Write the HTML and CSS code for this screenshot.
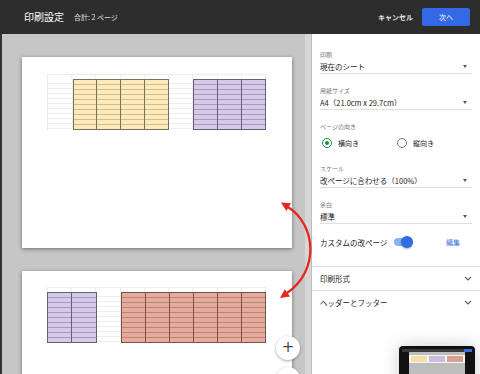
FILE: index.html
```html
<!DOCTYPE html>
<html lang="ja">
<head>
<meta charset="UTF-8">
<meta name="viewport" content="width=device-width, initial-scale=1.0">
<title>印刷設定</title>
<link rel="stylesheet" href="styles.css">
</head>
<body>
  <header class="topbar">
    <h1 class="title">印刷設定</h1>
    <span class="total">合計: 2 ページ</span>
    <div class="actions">
      <span class="cancel">キャンセル</span>
      <span class="next">次へ</span>
    </div>
  </header>

  <div class="main">
    <div class="preview">
      <!-- page 1 -->
      <div class="page">
        <div class="sheet">
          <div class="sheet-head"><span></span><span></span><span></span><span></span><span></span><span></span><span></span><span></span><span></span></div>
          <div class="sheet-body">
            <div class="grp blank w1"><span></span></div>
            <div class="grp yellow w4"><span></span><span></span><span></span><span></span></div>
            <div class="grp blank w1"><span></span></div>
            <div class="grp purple w3"><span></span><span></span><span></span></div>
          </div>
        </div>
      </div>
      <!-- page 2 -->
      <div class="page page-two">
        <div class="sheet">
          <div class="sheet-head"><span></span><span></span><span></span><span></span><span></span><span></span><span></span><span></span><span></span></div>
          <div class="sheet-body">
            <div class="grp purple w2"><span></span><span></span></div>
            <div class="grp blank w1"><span></span></div>
            <div class="grp red w6"><span></span><span></span><span></span><span></span><span></span><span></span></div>
          </div>
        </div>
      </div>
    </div>
    <div class="scroll"></div>

    <div class="panel">
      <div class="field">
        <div class="label">印刷</div>
        <div class="value">現在のシート<i class="caret"></i></div>
      </div>
      <div class="field">
        <div class="label">用紙サイズ</div>
        <div class="value">A4（21.0cm x 29.7cm）<i class="caret"></i></div>
      </div>
      <div class="field">
        <div class="label">ページの向き</div>
        <div class="radio-row">
          <div class="radio-opt"><i class="radio checked"></i>横向き</div>
          <div class="radio-opt"><i class="radio"></i>縦向き</div>
        </div>
      </div>
      <div class="field">
        <div class="label">スケール</div>
        <div class="value">改ページに合わせる（100%）<i class="caret"></i></div>
      </div>
      <div class="field tight">
        <div class="label">余白</div>
        <div class="value">標準<i class="caret"></i></div>
      </div>
      <div class="toggle-row">
        <span>カスタムの改ページ</span>
        <span class="toggle"><i class="knob"></i></span>
        <span class="edit">編集</span>
      </div>
      <div class="section">印刷形式
        <svg class="chev" width="8" height="5" viewBox="0 0 8 5"><polyline points="1,1 4,4 7,1" fill="none" stroke="#5f6368" stroke-width="1.2"/></svg>
      </div>
      <div class="section">ヘッダーとフッター
        <svg class="chev" width="8" height="5" viewBox="0 0 8 5"><polyline points="1,1 4,4 7,1" fill="none" stroke="#5f6368" stroke-width="1.2"/></svg>
      </div>

      <div class="thumb">
        <div class="thumb-bar"><i></i></div>
        <div class="thumb-body">
          <div class="thumb-strip"><i class="ty"></i><i class="tp"></i><i class="tr"></i></div>
        </div>
      </div>
    </div>

    <!-- overlays -->
    <svg class="arrow" width="45" height="115" viewBox="0 0 45 115">
      <path d="M18 13 C 46 31, 50 76, 17 99" fill="none" stroke="#e8261c" stroke-width="2.3"/>
      <polygon points="11,8.5 16.4,17 21,9.2" fill="#e8261c"/>
      <polygon points="10,104 20,102.6 14.8,95.2" fill="#e8261c"/>
    </svg>
    <div class="zoom-btn zoom-in">+</div>
    <div class="zoom-btn zoom-out"></div>
  </div>
</body>
</html>
```

FILE: styles.css
```css
body {
  margin: 0;
  padding: 0;
  width: 480px;
  height: 374px;
  overflow: hidden;
  background-color: #333;
  font-family: "Noto Sans CJK JP", "Noto Sans", sans-serif;
  color: #222;
}

/* top bar */
.topbar {
  height: 34px;
  box-sizing: border-box;
  padding: 0 10px 0 24px;
  display: flex;
  align-items: center;
  background-color: #2d2d2d;
  color: #fff;
}
.title {
  margin: 0 10px 0 0;
  font-size: 10px;
  font-weight: normal;
  line-height: 14px;
}
.total {
  font-size: 7px;
  color: #e0e0e0;
}
.actions {
  margin-left: auto;
  display: flex;
  align-items: center;
}
.cancel {
  font-size: 7px;
  font-weight: bold;
  color: #e6e6e6;
  margin-right: 9px;
}
.next {
  width: 48px;
  height: 18px;
  line-height: 18px;
  text-align: center;
  font-size: 7px;
  background-color: #3469e6;
  border-radius: 2px;
  color: #fff;
}

/* main area */
.main {
  height: 340px;
  display: flex;
  position: relative;
  overflow: hidden;
}
.preview {
  margin-left: 2px;
  width: 303px;
  flex-shrink: 0;
  box-sizing: border-box;
  padding: 23px 0 0 20px;
  background-color: #c6c6c6;
  display: flex;
  flex-direction: column;
  gap: 23px;
}
.page {
  width: 270px;
  height: 191px;
  flex-shrink: 0;
  box-sizing: border-box;
  padding: 17px 0 0 25px;
  background-color: #fff;
  box-shadow: 0 1px 4px rgba(0, 0, 0, 0.45);
}
.page-two {
  padding-top: 16px;
}
.scroll {
  width: 6px;
  flex-shrink: 0;
  background-color: #d7d7d7;
}

/* mini spreadsheet */
.sheet {
  width: 219px;
}
.sheet-head {
  display: flex;
  height: 5px;
}
.sheet-head span {
  flex: 1;
  border-top: 1px solid #ececec;
  border-right: 1px solid #ececec;
}
.sheet-head span:first-child {
  border-left: 1px solid #ececec;
}
.sheet-body {
  display: flex;
  height: 51px;
}
.grp {
  display: flex;
  box-sizing: border-box;
  background-image: repeating-linear-gradient(to bottom, transparent 0 4px, var(--line) 4px 5px);
}
.grp span {
  flex: 1;
  border-right: 1px solid var(--col);
}
.grp span:last-child {
  border-right: none;
}
.w1 { flex: 1; }
.w2 { flex: 2; }
.w3 { flex: 3; }
.w4 { flex: 4; }
.w6 { flex: 6; }
.blank {
  --line: #ededed;
  --col: #ededed;
  background-color: #fff;
  border-right: 1px solid #ededed;
}
.sheet-body .blank:first-child {
  border-left: 1px solid #ededed;
}
.yellow {
  --line: rgba(110, 90, 50, 0.32);
  --col: #7a705c;
  background-color: #fdeabb;
  border: 1px solid #7a705c;
}
.purple {
  --line: rgba(70, 50, 100, 0.32);
  --col: #685e7a;
  background-color: #d5cae8;
  border: 1px solid #685e7a;
}
.red {
  --line: rgba(110, 40, 30, 0.3);
  --col: #76524b;
  background-color: #e5ab9e;
  border: 1px solid #76524b;
}

/* settings panel */
.panel {
  flex: 1;
  position: relative;
  box-sizing: border-box;
  padding-top: 15px;
  background-color: #fff;
  border-left: 1px solid #bdbdbd;
}
.field {
  margin: 0 10px 11px 8px;
}
.field.tight {
  margin-bottom: 8px;
}
.label {
  font-size: 6px;
  line-height: 11px;
  color: #757575;
}
.value {
  font-size: 7.5px;
  line-height: 13px;
  display: flex;
  justify-content: space-between;
  align-items: center;
  border-bottom: 1px solid #e0e0e0;
}
.caret {
  width: 0;
  height: 0;
  margin-right: 5px;
  border-left: 2.5px solid transparent;
  border-right: 2.5px solid transparent;
  border-top: 3px solid #555;
}
.radio-row {
  margin-top: 2px;
  height: 18px;
  display: flex;
  align-items: center;
  font-size: 7px;
}
.radio-opt {
  width: 75px;
  display: flex;
  align-items: center;
  margin-left: 2px;
}
.radio-opt + .radio-opt {
  margin-left: 0;
}
.radio {
  width: 10px;
  height: 10px;
  box-sizing: border-box;
  margin-right: 6px;
  border: 1.3px solid #757575;
  border-radius: 50%;
  position: relative;
}
.radio.checked {
  border-color: #1e8e3e;
}
.radio.checked::after {
  content: "";
  position: absolute;
  left: 1.7px;
  top: 1.7px;
  width: 4px;
  height: 4px;
  border-radius: 50%;
  background-color: #1e8e3e;
}
.toggle-row {
  margin: 0 0 14px 8px;
  height: 20px;
  display: flex;
  align-items: center;
  font-size: 7.5px;
}
.toggle {
  position: relative;
  width: 17px;
  height: 8px;
  margin-left: 7px;
  border-radius: 4px;
  background-color: #8fb0ef;
}
.knob {
  position: absolute;
  right: -2px;
  top: -2px;
  width: 12px;
  height: 12px;
  border-radius: 50%;
  background-color: #2f6de1;
  box-shadow: 0 1px 2px rgba(0, 0, 0, 0.3);
}
.edit {
  margin-left: auto;
  margin-right: 22px;
  font-size: 7px;
  color: #3b78e0;
}
.section {
  height: 24px;
  box-sizing: border-box;
  padding: 0 10px 0 8px;
  display: flex;
  align-items: center;
  justify-content: space-between;
  border-top: 1px solid #dcdcdc;
  font-size: 7.5px;
}
.section:last-of-type {
  border-bottom: 1px solid #dcdcdc;
}

/* floating thumbnail */
.thumb {
  position: absolute;
  right: 7px;
  top: 312px;
  width: 76px;
  height: 40px;
  box-sizing: border-box;
  padding: 3px;
  background-color: #111;
  border-radius: 4px;
  box-shadow: 0 0 18px rgba(0, 0, 0, 0.2);
}
.thumb-bar {
  height: 3px;
  background-color: #3a3a3a;
  display: flex;
  justify-content: flex-end;
}
.thumb-bar i {
  width: 8px;
  background-color: #3b6fe0;
}
.thumb-body {
  height: 30px;
  margin: 0 7px;
  background-color: #bdbdbd;
  padding-top: 3px;
  box-sizing: border-box;
}
.thumb-strip {
  height: 8px;
  background-color: #f4f4f4;
  display: flex;
  gap: 2px;
  padding: 1px 2px;
  box-sizing: border-box;
}
.thumb-strip i {
  flex: 1;
}
.thumb-strip .ty { background-color: #f3dfa8; }
.thumb-strip .tp { background-color: #c9bde0; }
.thumb-strip .tr { background-color: #dc9e90; }

/* overlays on the preview */
.arrow {
  position: absolute;
  left: 270px;
  top: 160px;
}
.zoom-btn {
  position: absolute;
  left: 276px;
  width: 24px;
  height: 24px;
  border-radius: 50%;
  background-color: #fff;
  box-shadow: 0 1px 3px rgba(0, 0, 0, 0.35);
  text-align: center;
  line-height: 23px;
  font-size: 15px;
  color: #444;
  font-family: "DejaVu Sans", sans-serif;
}
.zoom-in {
  top: 302px;
}
.zoom-out {
  top: 333px;
}
```
